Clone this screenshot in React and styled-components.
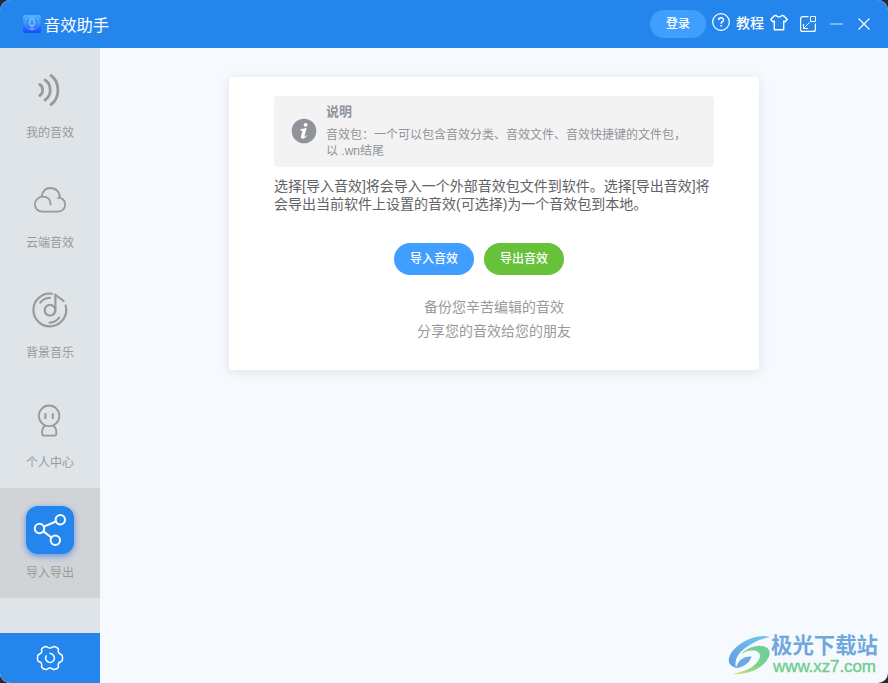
import React from "react"
import styled, { createGlobalStyle, css } from "styled-components"

const colors = {
  primary: "#2486ed",
  primaryLight: "#409eff",
  success: "#67c23a",
  sidebar: "#dfe4e8",
  sidebarActive: "#d1d4d7",
  page: "#f6faff",
  icon: "#999999",
  alert: "#909399",
  text: "#606266",
}

const SIDEBAR_WIDTH_PX = 100
const TOPBAR_HEIGHT_PX = 48

const GlobalStyle = createGlobalStyle`
  * {
    box-sizing: border-box;
  }

  body {
    margin: 0;
    background: #2b2629;
    font-family: "Liberation Sans", "Noto Sans CJK SC", sans-serif;
    overflow: hidden;
  }
`

const Window = styled.div`
  display: flex;
  flex-direction: column;
  width: 100vw;
  height: 100vh;
  border-radius: 10px;
  background: ${colors.page};
  overflow: hidden;
  position: relative;
`

const TopBar = styled.header`
  display: flex;
  flex: none;
  justify-content: space-between;
  align-items: center;
  height: ${TOPBAR_HEIGHT_PX}px;
  padding: 0 17px 0 23px;
  background: ${colors.primary};
  color: #fff;
`

const Brand = styled.div`
  display: flex;
  align-items: center;
  gap: 3px;
  font-size: 16.3px;
  line-height: 24px;

  span {
    padding-top: 1px;
  }

  svg {
    display: block;
  }
`

const TopActions = styled.div`
  display: flex;
  align-items: center;
  height: 100%;

  svg {
    display: block;
    flex: none;
  }
`

const LoginButton = styled.button`
  width: 56px;
  height: 28px;
  margin-right: 6px;
  padding: 0;
  border: none;
  border-radius: 14px;
  background: ${colors.primaryLight};
  color: #fff;
  font: 500 12px/28px "Liberation Sans", "Noto Sans CJK SC", sans-serif;
`

const TutorialLink = styled.a`
  display: flex;
  align-items: center;
  gap: 6px;
  margin-right: 6px;
  font-size: 14px;
  font-weight: 500;
  line-height: 20px;

  span {
    margin-top: -3px;
  }

  svg {
    margin-top: -4px;
  }
`

const WindowIcons = styled.div`
  display: flex;
  align-items: center;
  gap: 13px;

  svg:first-child {
    margin: -4px -1px 0 0;
  }

  svg:nth-child(2) {
    margin-right: 1px;
  }
`

const Body = styled.div`
  display: flex;
  flex: 1;
  min-height: 0;
`

const Sidebar = styled.nav`
  display: flex;
  flex-direction: column;
  flex: none;
  width: ${SIDEBAR_WIDTH_PX}px;
  background: ${colors.sidebar};
`

const SidebarItem = styled.div`
  display: flex;
  flex-direction: column;
  align-items: center;
  height: 110px;
  padding-top: 18px;
  color: ${colors.icon};
  font-size: 12px;
  line-height: 18px;
  background: ${({ $active }) =>
    $active ? colors.sidebarActive : "transparent"};
`

const SidebarIcon = styled.div`
  width: 48px;
  height: 48px;
  margin-bottom: 10px;
  border-radius: 12px;

  svg {
    display: block;
  }

  ${({ $active }) =>
    $active &&
    css`
      background: ${colors.primary};
      color: #fff;
      box-shadow: 0 2px 6px rgba(36, 100, 237, 0.65);
    `}
`

const SettingsButton = styled.div`
  display: flex;
  justify-content: center;
  align-items: center;
  height: 50px;
  margin-top: auto;
  background: ${colors.primary};
  color: #fff;
`

const Main = styled.main`
  display: flex;
  flex: 1;
  justify-content: center;
  align-items: flex-start;
  padding-top: 29px;
`

const Card = styled.section`
  width: 530px;
  height: 293px;
  padding: 19px 45px 0;
  border-radius: 4px;
  background: #fff;
  box-shadow: 0 2px 12px rgba(0, 0, 0, 0.1);
`

const Alert = styled.div`
  display: flex;
  align-items: center;
  gap: 8px;
  height: 71px;
  padding: 0 16px 2px;
  border-radius: 4px;
  background: #f3f3f3;
  color: ${colors.alert};

  svg {
    display: block;
    flex: none;
  }
`

const AlertTitle = styled.div`
  font-size: 13px;
  font-weight: 700;
  line-height: 18px;
`

const AlertText = styled.p`
  width: 364px;
  margin: 6px 0 0;
  font-size: 12px;
  line-height: 16px;
`

const Intro = styled.p`
  margin: 10px 0 0;
  color: ${colors.text};
  font-size: 14px;
  line-height: 18px;
  word-break: break-all;
`

const ButtonRow = styled.div`
  display: flex;
  justify-content: center;
  gap: 10px;
  margin-top: 30px;
  padding-right: 30px;
`

const PillButton = styled.button`
  width: 80px;
  height: 32px;
  padding: 0;
  border: none;
  border-radius: 16px;
  background: ${({ $color }) => $color};
  color: #fff;
  font: 500 12px/30px "Liberation Sans", "Noto Sans CJK SC", sans-serif;
`

const Hint = styled.div`
  margin-top: 20px;
  color: ${colors.icon};
  font-size: 14px;
  line-height: 24px;
  text-align: center;
`

const SiteMark = styled.div`
  position: absolute;
  right: 10px;
  bottom: 7px;
  display: flex;
  align-items: center;
`

const SiteName = styled.div`
  color: #6fa8dc;
  font-size: 21.4px;
  font-weight: 700;
  line-height: 24px;
`

const SiteUrl = styled.div`
  padding-left: 2px;
  color: #70cd8e;
  font-family: "Liberation Sans", sans-serif;
  font-size: 17px;
  line-height: 18px;
  letter-spacing: -0.1px;
  -webkit-text-stroke: 0.4px #70cd8e;
`

const LogoIcon = () => (
  <svg width="18" height="18" viewBox="0 0 18 18" fill="none">
    <defs>
      <linearGradient id="logo" x1="0" y1="0" x2="0" y2="1">
        <stop offset="0" stopColor="#46b9fb" />
        <stop offset="1" stopColor="#1849ff" />
      </linearGradient>
    </defs>
    <rect width="18" height="18" rx="2" fill="url(#logo)" />
    <circle cx="9" cy="8" r="7" stroke="#77bfff" opacity=".55" />
    <path d="M5 7.5a4 4.5 0 0 0 8 0M9 12v2M6.5 14h5" stroke="#8accff" opacity=".8" />
    <rect x="7" y="3.5" width="4" height="7" rx="2" stroke="#9bd8ff" />
  </svg>
)

const HelpIcon = () => (
  <svg width="18" height="18" viewBox="0 0 18 18" fill="none" stroke="#fff">
    <circle cx="9" cy="9" r="8.3" strokeWidth="1.2" />
    <path
      d="M6.6 7.1C6.6 3.9 11.5 4 11.5 6.9 11.5 8.7 9.1 8.7 9.1 10.7"
      strokeWidth="1.5"
    />
    <path d="M9.1 12v1.5" strokeWidth="1.6" />
  </svg>
)

const ShirtIcon = () => (
  <svg
    width="18"
    height="17"
    viewBox="0 0 18 17"
    fill="none"
    stroke="#fff"
    strokeWidth="1.4"
    strokeLinejoin="round"
  >
    <path d="M6 1.3C7 3.6 11 3.6 12 1.3L14 2 17.2 5.5 15.2 7.8 13.7 7v8.8H4.3V7L2.8 7.8.8 5.5 4 2Z" />
  </svg>
)

const ResizeIcon = () => (
  <svg width="16" height="16" viewBox="0 0 16 16" fill="none" stroke="#fff">
    <path
      d="M8.5.6H2.6a2 2 0 0 0-2 2v10.8a2 2 0 0 0 2 2h10.8a2 2 0 0 0 2-2V7.5"
      strokeWidth="1.2"
    />
    <path d="M10.5.5h5v5h-5zM9.5 6.5 3.8 12.2M3.5 8v4.5H8" />
  </svg>
)

const MinimizeIcon = () => (
  <svg width="14" height="14" viewBox="0 0 14 14" stroke="#fff">
    <path d="M0 7h13" opacity=".8" />
  </svg>
)

const CloseIcon = () => (
  <svg width="14" height="14" viewBox="0 0 14 14" stroke="#fff" strokeWidth="1.1">
    <path d="m1.5 1.5 11 11m0-11-11 11" />
  </svg>
)

const NavIcon = ({ children }) => (
  <svg
    width="48"
    height="48"
    viewBox="0 0 48 48"
    fill="none"
    stroke="currentColor"
    strokeWidth="2"
    strokeLinecap="round"
    strokeLinejoin="round"
  >
    {children}
  </svg>
)

const SoundIcon = () => (
  <NavIcon>
    <path
      d="M13.8 18.5C17.6 21 17.6 27 13.8 29.5M19 14C26 18.5 26 29.5 19 34M25 9.5C34.2 16 34.2 32 25 38.5"
      strokeWidth="2.8"
    />
  </NavIcon>
)

const CloudIcon = () => (
  <NavIcon>
    <path
      d="M24.6 28.5C24.6 23.5 21.5 20.7 17.2 20.7A8 7.6 0 0 0 8.9 28.3C8.9 32.6 12.2 35.7 16.4 35.7H31.6C36 35.7 39.2 32.5 39.2 28.5 39.2 24.4 36 21.5 32 21.8M15.4 20.8C16.3 15.2 20 12 24.6 12 30 12 34.1 16.4 33.9 21.8"
      strokeWidth="1.8"
    />
  </NavIcon>
)

const MusicIcon = () => (
  <NavIcon>
    <path d="M26 7.7A16.4 16.4 0 1 0 39.6 19.5" strokeWidth="2.1" />
    <circle cx="24" cy="24.2" r="5.3" strokeWidth="2.2" />
    <path d="M29.4 24.2V8.5C31.2 11.2 34.6 12 37.6 15" strokeWidth="2.1" />
    <path
      d="M14.2 16.7C16.3 13.9 19.7 12 24 11.7M23.5 36.7C28 36.4 31.3 34.6 33 31.5"
      strokeWidth="2.1"
    />
  </NavIcon>
)

const UserIcon = () => (
  <NavIcon>
    <circle cx="23.1" cy="19.8" r="10.3" strokeWidth="1.8" />
    <path d="M19.4 17.3v5.6M26.8 17.3v5.6" strokeWidth="2" strokeLinecap="butt" />
    <path
      d="M19 30.2C16.7 31.2 16 33.8 16.1 37.5c0 1.4.6 2.1 1.9 2.1h10.4c1.3 0 1.9-.7 1.9-2.1.1-3.7-.6-6.3-2.9-7.3"
      strokeWidth="1.8"
    />
  </NavIcon>
)

const ShareIcon = () => (
  <NavIcon>
    <circle cx="13.5" cy="22.5" r="4.7" />
    <circle cx="34.3" cy="13.7" r="4.7" />
    <circle cx="29.3" cy="34.3" r="4.7" />
    <path d="m17.9 20.7 12-5.2M17.3 25.4l8.2 6.1" />
  </NavIcon>
)

const GearIcon = () => (
  <svg
    width="28"
    height="28"
    viewBox="0 0 28 28"
    fill="none"
    stroke="currentColor"
    strokeWidth="1.5"
    strokeLinecap="round"
    strokeLinejoin="round"
  >
    <path d="M14 4.1C16 4.1 17 2.2 18.3 2.4 20 2.8 21.6 3.8 22.3 4.8 22.9 6.2 21.6 7 22.6 8.7 23.5 10.2 25.6 10.2 26.2 11.4 26.7 13 26.7 15 26.2 16.6 25.6 17.8 23.5 17.8 22.6 19.3 21.6 21 22.9 21.8 22.3 23.2 21.6 24.2 20 25.2 18.3 25.6 17 25.8 16 23.9 14 23.9S11 25.8 9.7 25.6C8 25.2 6.4 24.2 5.7 23.2 5.1 21.8 6.4 21 5.4 19.3 4.5 17.8 2.4 17.8 1.8 16.6 1.3 15 1.3 13 1.8 11.4 2.4 10.2 4.5 10.2 5.4 8.7 6.4 7 5.1 6.2 5.7 4.8 6.4 3.8 8 2.8 9.7 2.4 11 2.2 12 4.1 14 4.1Z" />
    <path d="M14 9.6A4.4 4.4 0 1 1 10.2 11.8" />
  </svg>
)

const InfoIcon = () => (
  <svg width="28" height="28" viewBox="0 0 28 28">
    <circle cx="14" cy="14" r="12.3" fill={colors.alert} />
    <circle cx="15.6" cy="7.8" r="1.9" fill="#fff" />
    <path
      d="M10.5 12.3 16.7 11 14.4 19c-.2.9.3 1.1 1.9-.8l.7.6c-2.7 4.2-7 3.6-6 .2l1.5-5.2-2.2-.2z"
      fill="#fff"
    />
  </svg>
)

const SiteLogo = () => (
  <svg width="43" height="42" viewBox="0 0 43 42">
    <defs>
      <linearGradient id="swooshTop" x1="0" y1="1" x2="1" y2="0">
        <stop offset="0" stopColor="#609be1" />
        <stop offset="1" stopColor="#73c9ef" />
      </linearGradient>
      <linearGradient id="swooshBottom" x1="0" y1="1" x2="1" y2="0">
        <stop offset="0" stopColor="#d9e36d" />
        <stop offset="0.5" stopColor="#7bd28d" />
        <stop offset="1" stopColor="#68cda0" />
      </linearGradient>
    </defs>
    <path
      d="M42 3C28-1 9 9 2.5 20 -1 27 1 32 8 34 6 26 10 19 18 13.5 24 9 32 5 42 3Z"
      fill="url(#swooshTop)"
    />
    <path
      d="M13 20C22 11 37 9 41 16 45 25 29 42 4 40 18 38 31 31 32 22 32 16 22 14.5 13 20Z"
      fill="url(#swooshBottom)"
    />
    <path d="M8 34C15 33.5 22 29 23.5 22.5 16 22 9.5 26.5 8 34Z" fill="#6da8e2" />
  </svg>
)

const navItems = [
  { label: "我的音效", Icon: SoundIcon },
  { label: "云端音效", Icon: CloudIcon },
  { label: "背景音乐", Icon: MusicIcon },
  { label: "个人中心", Icon: UserIcon },
  { label: "导入导出", Icon: ShareIcon, active: true },
]

const App = () => (
  <>
    <GlobalStyle />
    <Window>
      <TopBar>
        <Brand>
          <LogoIcon />
          <span>音效助手</span>
        </Brand>
        <TopActions>
          <LoginButton>登录</LoginButton>
          <TutorialLink>
            <HelpIcon />
            <span>教程</span>
          </TutorialLink>
          <WindowIcons>
            <ShirtIcon />
            <ResizeIcon />
            <MinimizeIcon />
            <CloseIcon />
          </WindowIcons>
        </TopActions>
      </TopBar>
      <Body>
        <Sidebar>
          {navItems.map(({ label, Icon, active }) => (
            <SidebarItem key={label} $active={active}>
              <SidebarIcon $active={active}>
                <Icon />
              </SidebarIcon>
              {label}
            </SidebarItem>
          ))}
          <SettingsButton>
            <GearIcon />
          </SettingsButton>
        </Sidebar>
        <Main>
          <Card>
            <Alert>
              <InfoIcon />
              <div>
                <AlertTitle>说明</AlertTitle>
                <AlertText>
                  音效包：一个可以包含音效分类、音效文件、音效快捷键的文件包，
                  以 .wn结尾
                </AlertText>
              </div>
            </Alert>
            <Intro>
              选择[导入音效]将会导入一个外部音效包文件到软件。选择[导出音效]将会导出当前软件上设置的音效(可选择)为一个音效包到本地。
            </Intro>
            <ButtonRow>
              <PillButton $color={colors.primaryLight}>导入音效</PillButton>
              <PillButton $color={colors.success}>导出音效</PillButton>
            </ButtonRow>
            <Hint>
              备份您辛苦编辑的音效
              <br />
              分享您的音效给您的朋友
            </Hint>
          </Card>
        </Main>
      </Body>
      <SiteMark>
        <SiteLogo />
        <div>
          <SiteName>极光下载站</SiteName>
          <SiteUrl>www.xz7.com</SiteUrl>
        </div>
      </SiteMark>
    </Window>
  </>
)

export default App
